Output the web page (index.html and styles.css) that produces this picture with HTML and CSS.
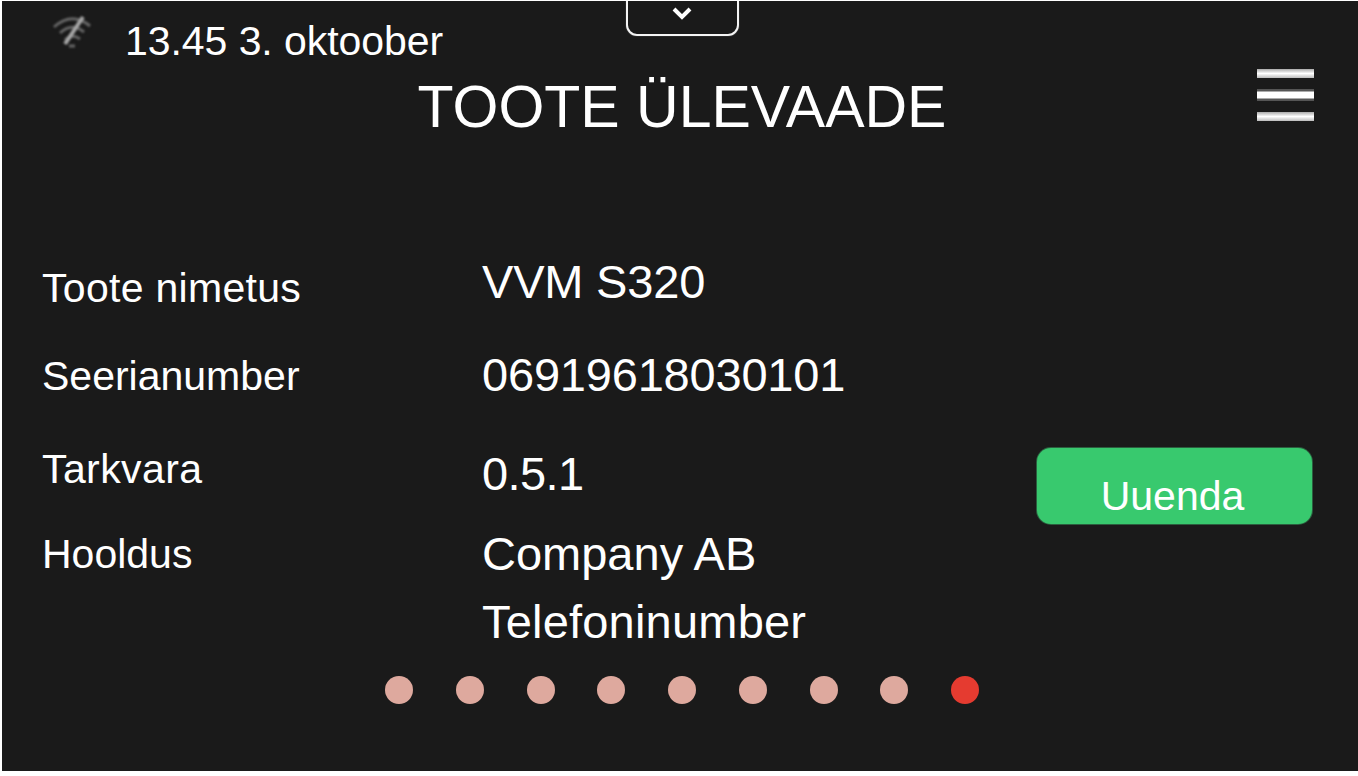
FILE: index.html
```html
<!DOCTYPE html>
<html lang="et">

<head>
    <meta charset="UTF-8">
    <title>Toote ülevaade</title>
    <link rel="stylesheet" href="styles.css">
</head>

<body>
    <div class="screen">
        <div class="pull-tab">
            <svg width="24" height="16" viewBox="0 0 24 16">
                <path d="M4 3 L12 11 L20 3" fill="none" stroke="#fff" stroke-width="4"/>
            </svg>
        </div>

        <div class="status">
            <svg class="wifi" width="44" height="38" viewBox="0 0 44 38">
                <g fill="none" stroke="#666" stroke-width="3">
                    <path d="M4 15 Q22 -1 40 14"/>
                    <path d="M10 21 Q22 10 34 20"/>
                    <path d="M15 28 Q22 21 30 27"/>
                    <path d="M19 34 L25 34"/>
                </g>
                <path d="M33 5 L15 32" fill="none" stroke="#a8a8a8" stroke-width="4"/>
            </svg>
            <span class="clock">13.45 3. oktoober</span>
        </div>

        <div class="title-row">
            <h1>TOOTE ÜLEVAADE</h1>
            <div class="menu">
                <span></span>
                <span class="mid"></span>
                <span></span>
            </div>
        </div>

        <div class="info">
            <div class="label l1">Toote nimetus</div>
            <div class="value tight">VVM S320</div>
            <div class="spare"></div>

            <div class="label l2">Seerianumber</div>
            <div class="value tight">06919618030101</div>
            <div class="spare"></div>

            <div class="label l3">Tarkvara</div>
            <div class="value version">0.5.1</div>
            <button class="update">Uuenda</button>

            <div class="label l4">Hooldus</div>
            <div class="value contact">Company AB<br><span class="phone">Telefoninumber</span></div>
        </div>

        <div class="dots">
            <i></i><i></i><i></i><i></i><i></i><i></i><i></i><i></i><i class="current"></i>
        </div>
    </div>
</body>

</html>
```

FILE: styles.css
```css
html, body {
    margin: 0;
    height: 100%;
    background: #fff;
}

.screen {
    position: relative;
    box-sizing: border-box;
    width: 1356px;
    height: 770px;
    margin: 1px 0 0 2px;
    background: #1a1a1a;
    color: #fff;
    font-family: "Liberation Sans", Arial, sans-serif;
    overflow: hidden;
}

.pull-tab {
    position: absolute;
    left: 624px;
    top: -4px;
    width: 113px;
    height: 39px;
    box-sizing: border-box;
    border: 2px solid #f4f4f4;
    border-radius: 0 0 11px 11px;
    box-shadow: 0 0 1px rgba(255, 255, 255, 0.6);
}

.pull-tab svg {
    display: block;
    margin: 7px 0 0 42px;
    filter: blur(0.6px);
}

.status {
    display: flex;
    padding: 11px 0 0 48px;
    height: 50px;
    box-sizing: border-box;
}

.wifi {
    filter: blur(0.9px);
}

.clock {
    margin-left: 31px;
    margin-top: 6px;
    font-size: 41px;
    line-height: 47px;
    letter-spacing: -0.06px;
}

.title-row {
    display: flex;
    justify-content: center;
    position: relative;
    height: 60px;
    margin-top: 23px;
}

h1 {
    margin: 0 0 0 4px;
    font-weight: normal;
    font-size: 59px;
    line-height: 66px;
}

.menu {
    position: absolute;
    right: 44px;
    top: -5px;
    width: 57px;
}

.menu span {
    display: block;
    height: 9px;
    margin-bottom: 11px;
    background: linear-gradient(#aaa, #fff 50%, #bbb);
}

.menu span.mid {
    height: 12px;
    background: linear-gradient(#555 0, #555 2px, #fff 3px, #fff 9px, #555 10px);
}

.info {
    display: grid;
    grid-template-columns: 440px 555px 275px;
    grid-template-rows: 93px 98px 81px auto;
    padding: 121px 0 0 40px;
}

.label {
    font-size: 41px;
    line-height: 47px;
}

.l1 {
    margin-top: 10px;
    letter-spacing: 0.3px;
}

.l2 {
    margin-top: 5px;
}

.l3 {
    letter-spacing: 0.4px;
}

.l4 {
    margin-top: 4px;
}

.value {
    font-size: 47px;
    line-height: 54px;
}

.tight {
    letter-spacing: -0.2px;
}

.version {
    letter-spacing: -0.6px;
    padding-top: 1px;
}

.contact {
    line-height: 68px;
    margin-top: -7px;
}

.phone {
    letter-spacing: 0.2px;
}

.update {
    grid-row: 3 / span 2;
    grid-column: 3;
    align-self: start;
    margin-top: 2px;
    height: 76px;
    background: #38c96e;
    border: 0;
    border-radius: 14px;
    box-shadow: 0 0 0 1px #2b5f3f;
    color: #fff;
    font-family: inherit;
    font-size: 41px;
    padding: 20px 4px 0 0;
}

.dots {
    position: absolute;
    left: 383px;
    top: 675px;
    display: flex;
    gap: 42.75px;
}

.dots i {
    display: block;
    width: 28px;
    height: 28px;
    border-radius: 50%;
    background: #dea99e;
}

.dots i.current {
    background: #e53b30;
}
```
